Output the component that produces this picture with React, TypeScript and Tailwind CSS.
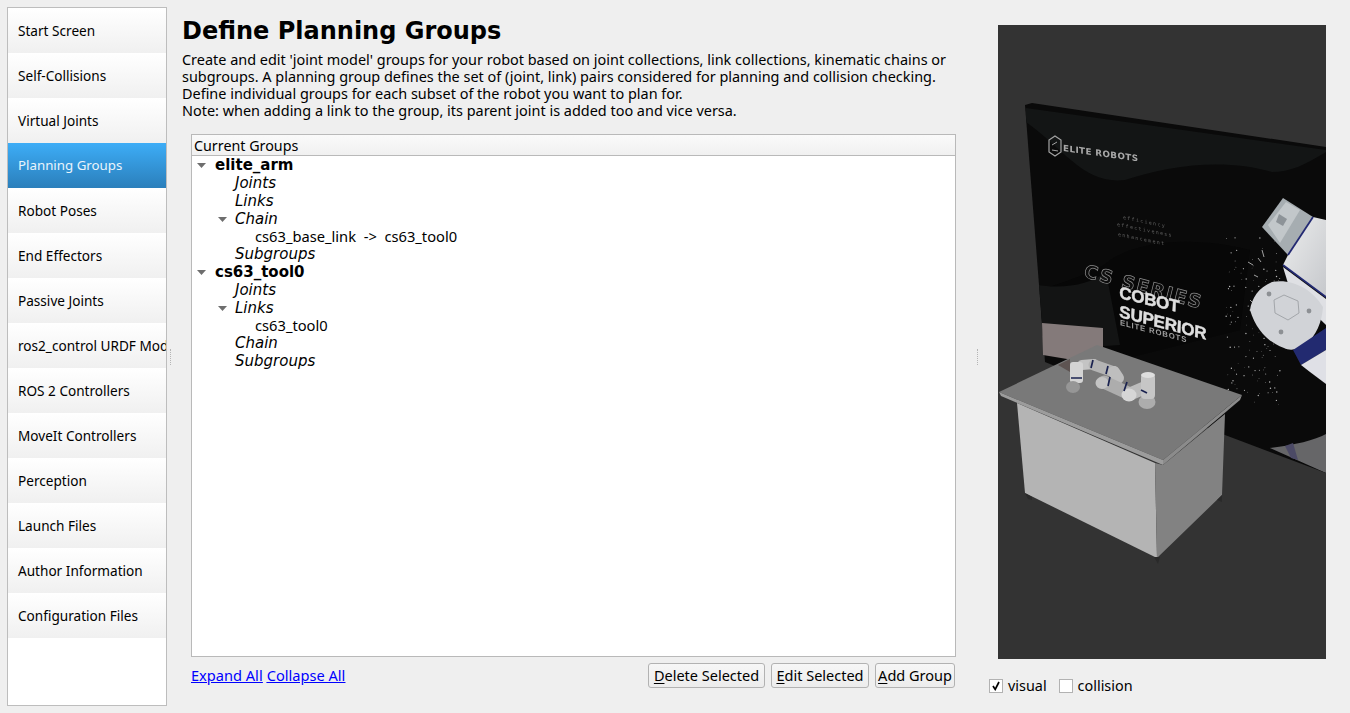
const navItems = [
  "Start Screen",
  "Self-Collisions",
  "Virtual Joints",
  "Planning Groups",
  "Robot Poses",
  "End Effectors",
  "Passive Joints",
  "ros2_control URDF Modifications",
  "ROS 2 Controllers",
  "MoveIt Controllers",
  "Perception",
  "Launch Files",
  "Author Information",
  "Configuration Files",
];

type TreeRow = {
  label: string;
  kind: "group" | "section" | "item";
  open?: boolean;
  h: string;
};

const treeRows: TreeRow[] = [
  { label: "elite_arm", kind: "group", open: true, h: "h-[18px]" },
  { label: "Joints", kind: "section", h: "h-[18px]" },
  { label: "Links", kind: "section", h: "h-[18px]" },
  { label: "Chain", kind: "section", open: true, h: "h-[18px]" },
  { label: "cs63_base_link  ->  cs63_tool0", kind: "item", h: "h-[18px]" },
  { label: "Subgroups", kind: "section", h: "h-[17px]" },
  { label: "cs63_tool0", kind: "group", open: true, h: "h-[18px]" },
  { label: "Joints", kind: "section", h: "h-[18px]" },
  { label: "Links", kind: "section", open: true, h: "h-[18px]" },
  { label: "cs63_tool0", kind: "item", h: "h-[18px]" },
  { label: "Chain", kind: "section", h: "h-[17px]" },
  { label: "Subgroups", kind: "section", h: "h-[18px]" },
];

function Caret() {
  return (
    <svg width="9" height="5" viewBox="0 0 9 5" className="shrink-0">
      <path d="M0 0h9L4.5 5z" fill="#6e6e6e" />
    </svg>
  );
}

function Splitter() {
  return (
    <div className="flex flex-col items-center justify-center">
      <div className="h-[16px] w-px border-l border-dotted border-[#b5b5b5]" />
    </div>
  );
}

function ActionButton({ first, rest, width }: { first: string; rest: string; width: string }) {
  return (
    <button className={`h-[25px] rounded-[3px] border border-[#b2b2b2] bg-gradient-to-b from-[#f7f7f7] to-[#ececec] pb-[2px] text-[14.5px] leading-[20px] text-black ${width}`}>
      <span className="underline underline-offset-2">{first}</span>
      {rest}
    </button>
  );
}

function Particles() {
  const dots: { x: number; y: number; r: number }[] = [];
  let seed = 17;
  const next = () => {
    seed = (seed * 137 + 59) % 1009;
    return seed / 1009;
  };
  for (let i = 0; i < 130; i++) {
    const a = next();
    const b = next();
    dots.push({ x: 1226 + a * 54, y: 237 + b * 170, r: 0.3 + next() * 0.45 });
  }
  return (
    <g fill="#b8b8b8">
      {dots.map((d, i) => (
        <circle key={i} cx={d.x} cy={d.y} r={d.r} />
      ))}
      <path d="M1262 250l2 7M1258 258l3 4M1248 262l5 3M1254 275l4 2M1272 330l2 5M1250 300l3 3" stroke="#c9c9c9" strokeWidth="0.8" fill="none" />
    </g>
  );
}

function SmallArm() {
  return (
    <g>
      <g fill="none" strokeLinecap="round">
        <path d="M1082 365 L1094 364" strokeWidth="10" stroke="#c4c4c4" />
        <path d="M1094 365 L1114 372" strokeWidth="11" stroke="#b4b4b4" />
        <path d="M1114 372 L1118 378" strokeWidth="12" stroke="#bebebe" />
        <path d="M1104 382 L1130 394" strokeWidth="13" stroke="#adadad" />
        <path d="M1130 394 L1144 388" strokeWidth="13" stroke="#bcbcbc" />
      </g>
      <rect x="1070" y="362" width="13" height="21" rx="3" fill="#d4d4d4" />
      <ellipse cx="1073" cy="387" rx="7" ry="6" fill="#969696" />
      <ellipse cx="1102" cy="383" rx="6.5" ry="6" fill="#c4c4c4" />
      <ellipse cx="1129" cy="395" rx="7.5" ry="6.5" fill="#d6d6d6" />
      <ellipse cx="1147" cy="402" rx="8.5" ry="7" fill="#adadad" />
      <rect x="1141" y="374" width="14" height="25" rx="4" fill="#c6c6c6" />
      <ellipse cx="1148" cy="375" rx="7" ry="3" fill="#dedede" />
      <path d="M1093 360l-2 8M1108 366l-2 8M1110 377l-2 9M1127 382l-3 9M1071 378h11M1141 390l6 3" stroke="#1b2350" strokeWidth="1.7" fill="none" />
    </g>
  );
}

function ViewerScene() {
  return (
    <svg viewBox="998 25 328 634" className="block h-[634px] w-[328px]">
      <defs>
        <filter id="soft">
          <feGaussianBlur stdDeviation="0.35" />
        </filter>
        <clipPath id="board">
          <path d="M1025 105L1032 103L1326 147V473L1225 435L1045 362Z" />
        </clipPath>
        <linearGradient id="armbody" x1="0" y1="0" x2="1" y2="1">
          <stop offset="0" stopColor="#eceded" />
          <stop offset="1" stopColor="#c6c8cc" />
        </linearGradient>
      </defs>
      <rect x="998" y="25" width="328" height="634" fill="#333333" />

      <path d="M1025 105L1032 103L1326 147V473L1225 435L1045 362Z" fill="#0a0a0a" />
      <g clipPath="url(#board)">
        <path d="M1026 108L1326 150V152C1305 165 1290 172 1272 172C1225 158 1170 165 1125 180C1085 185 1065 150 1026 122Z" fill="#131515" />
        <path d="M1040 290C1070 280 1100 270 1110 260C1150 235 1210 240 1250 250L1240 330L1120 360L1043 345Z" fill="#070707" />
        <path d="M1034 284C1060 290 1090 285 1106 272L1120 345L1045 350Z" fill="#131414" />
        <Particles />
        <path d="M1270 448C1295 445 1315 440 1326 434V473Z" fill="#666668" />
        <path d="M1285 446L1293 443L1298 460L1291 458Z" fill="#4c4a66" />
      </g>

      <g filter="url(#soft)">
        <path d="M1055 136l6 4v12l-6 4-6-4v-12z" fill="none" stroke="#a4a4a4" strokeWidth="1.2" />
        <path d="M1052 145l5-3M1052 150l6 1" stroke="#a4a4a4" strokeWidth="1" />
        <text transform="matrix(1 0.14 0 1 1063 151)" fontFamily="'DejaVu Sans', sans-serif" fontWeight="700" fontSize="8.8" letterSpacing="0.4" fill="#a8a8a8">ELITE ROBOTS</text>
        <g fontFamily="'DejaVu Sans Mono', monospace" fontSize="5" fill="#5f5f5f" letterSpacing="1.3">
          <text transform="matrix(1 0.2 0 1 1123 219)">efficiency</text>
          <text transform="matrix(1 0.2 0 1 1117 226)">effectiveness</text>
          <text transform="matrix(1 0.2 0 1 1118 236)">enhancement</text>
        </g>
        <text transform="matrix(1 0.27 -0.25 1 1083 277)" fontFamily="'DejaVu Sans', sans-serif" fontWeight="700" fontSize="18" letterSpacing="1.6" fill="#0a0a0a" stroke="#8c8c8c" strokeWidth="0.7">CS SERIES</text>
        <g fontFamily="'Liberation Sans', sans-serif" fontWeight="700" fill="#dedede" stroke="#dedede" strokeWidth="0.45">
          <text transform="matrix(1 0.24 -0.05 1 1119 298)" fontSize="17" letterSpacing="-0.3">COBOT</text>
          <text transform="matrix(1 0.26 -0.05 1 1119 317)" fontSize="17" letterSpacing="-0.2">SUPERIOR</text>
          <text transform="matrix(1 0.26 0 1 1120 325)" fontSize="7.8" letterSpacing="0.8" fill="#9c9c9c" stroke="none">ELITE ROBOTS</text>
        </g>
      </g>

      <g clipPath="url(#board)" filter="url(#soft)">
        <path d="M1313 217L1326 220V297L1283 265L1288 255Z" fill="url(#armbody)" />
        <path d="M1262 227L1283 198L1313 217L1288 255Z" fill="#a6adb1" />
        <path d="M1268 225L1286 202L1300 210L1280 243Z" fill="#c2c7ca" />
        <path d="M1279 214l8 5-4 7-7-4z" fill="#8d9398" />
        <path d="M1313 217L1288 255" stroke="#242a73" strokeWidth="1.8" />
        <path d="M1283 265L1326 297" stroke="#242a73" strokeWidth="1.6" />
        <path d="M1283 267L1326 299V325L1290 290Z" fill="#dfe0e4" />
        <path d="M1250 310C1252 298 1258 288 1272 282C1290 278 1312 288 1323 307C1322 322 1316 336 1306 344C1298 350 1290 351 1284 348C1268 342 1256 330 1250 310Z" fill="#d1d3d7" />
        <path d="M1274 300l10-5 14 6 1 12-11 7-13-7z" fill="none" stroke="#a3a6aa" strokeWidth="1" />
        <circle cx="1269" cy="294" r="2.4" fill="#8d9094" />
        <circle cx="1309" cy="311" r="2.4" fill="#8d9094" />
        <circle cx="1281" cy="332" r="2.4" fill="#8d9094" />
        <path d="M1293 350L1326 328V350L1301 365Z" fill="#232a70" />
        <path d="M1301 365L1326 350V384L1310 372Z" fill="#dfe0e6" />
      </g>

      <path d="M1042 323L1103 328V365L1043 355Z" fill="#847a7a" />

      <path d="M999 392L1097 345L1103 347L1242 395L1163 460Z" fill="#797979" />
      <path d="M1058 365L1070 359V372Z" fill="#5e5452" />
      <path d="M999 392L1163 460V465L1001 396Z" fill="#9c9c9c" />
      <path d="M1163 460L1242 395L1240 400L1163 465Z" fill="#8b8b8b" />
      <path d="M1017 403L1155 463L1157 558L1025 493Z" fill="#b4b4b4" />
      <path d="M1155 463L1163 465L1225 414L1222 495L1157 558Z" fill="#828282" />
      <path d="M1025 493L1032 497V500L1028 499ZM1154 557H1160L1158 564ZM1217 500L1222 495V502Z" fill="#2a2a2a" />
      <SmallArm />
    </svg>
  );
}

export default function App() {
  return (
    <div className="flex h-[713px] w-[1350px] overflow-hidden bg-[#efefef] font-['Noto_Sans',sans-serif] text-black">
      <div className="ml-[7px] mt-[7px] h-[699px] w-[160px] shrink-0 border border-[#bdbdbd] bg-white">
        {navItems.map((item) => (
          <div
            key={item}
            className={
              item === "Planning Groups"
                ? "flex h-[45px] items-center overflow-hidden whitespace-nowrap bg-gradient-to-b from-[#3dadf7] to-[#2b7fbb] pl-[10px] pt-[1px] text-[13.3px] text-[#e9f4fc]"
                : "flex h-[45px] items-center overflow-hidden whitespace-nowrap bg-gradient-to-b from-white to-[#f0f0f0] pl-[10px] pt-[2px] text-[13.6px]"
            }
          >
            {item}
          </div>
        ))}
      </div>

      <div className="flex w-[15px] shrink-0 justify-start pl-[3px]">
        <Splitter />
      </div>

      <div className="w-[774px] shrink-0">
        <h1 className="mt-[17px] h-[29px] text-[24px] font-bold leading-[29px] font-['DejaVu_Sans',sans-serif]">
          Define Planning Groups
        </h1>
        <p className="mt-[5px] h-[68px] text-[14.45px] leading-[17px]">
          Create and edit 'joint model' groups for your robot based on joint collections, link collections, kinematic chains or
          <br />
          subgroups. A planning group defines the set of (joint, link) pairs considered for planning and collision checking.
          <br />
          Define individual groups for each subset of the robot you want to plan for.
          <br />
          Note: when adding a link to the group, its parent joint is added too and vice versa.
        </p>

        <div className="ml-[9px] mt-[15px] h-[523px] w-[765px] border border-[#b9b9b9] bg-white">
          <div className="flex h-[21px] items-center border-b border-[#b9b9b9] bg-gradient-to-b from-[#fafafa] to-[#f0f0f0] pl-[2px] pt-[2px] text-[14.3px]">
            Current Groups
          </div>
          <div>
            {treeRows.map((row, i) => (
              <div key={i} className={`flex items-center ${row.h}`}>
                <div className={row.kind === "group" ? "flex w-[23px] justify-end pr-[9px]" : row.kind === "section" ? "flex w-[43px] justify-end pr-[8px]" : "w-[63px]"}>
                  {row.open && <Caret />}
                </div>
                {row.kind === "group" && (
                  <span className="text-[15px] font-bold font-['DejaVu_Sans',sans-serif]">{row.label}</span>
                )}
                {row.kind === "section" && (
                  <span className="text-[15px] italic font-['DejaVu_Sans',sans-serif]">{row.label}</span>
                )}
                {row.kind === "item" && (
                  <span className="mb-[2px] whitespace-pre text-[14.7px]">{row.label}</span>
                )}
              </div>
            ))}
          </div>
        </div>

        <div className="ml-[9px] mt-[6px] flex w-[764px] items-center justify-between">
          <div className="flex gap-[4px] text-[14.6px] text-[#0000ff] underline">
            <a>Expand All</a>
            <a>Collapse All</a>
          </div>
          <div className="flex gap-[6px]">
            <ActionButton first="D" rest="elete Selected" width="w-[117px]" />
            <ActionButton first="E" rest="dit Selected" width="w-[98px]" />
            <ActionButton first="A" rest="dd Group" width="w-[80px]" />
          </div>
        </div>
      </div>

      <div className="flex w-[42px] shrink-0 justify-center">
        <Splitter />
      </div>

      <div className="w-[328px] shrink-0">
        <div className="mt-[25px]">
          <ViewerScene />
        </div>
        <div className="-ml-[9px] mt-[16px] flex items-center text-[14.4px]">
          <span className="flex h-[14px] w-[14px] items-center justify-center border border-[#b2b2b2] bg-white">
            <svg width="10" height="10" viewBox="0 0 10 10">
              <path d="M2 5l2.2 3.4L8 1" fill="none" stroke="#000" strokeWidth="1.7" />
            </svg>
          </span>
          <span className="ml-[5px]">visual</span>
          <span className="ml-[12px] h-[14px] w-[14px] border border-[#b2b2b2] bg-white" />
          <span className="ml-[5px]">collision</span>
        </div>
      </div>
    </div>
  );
}
